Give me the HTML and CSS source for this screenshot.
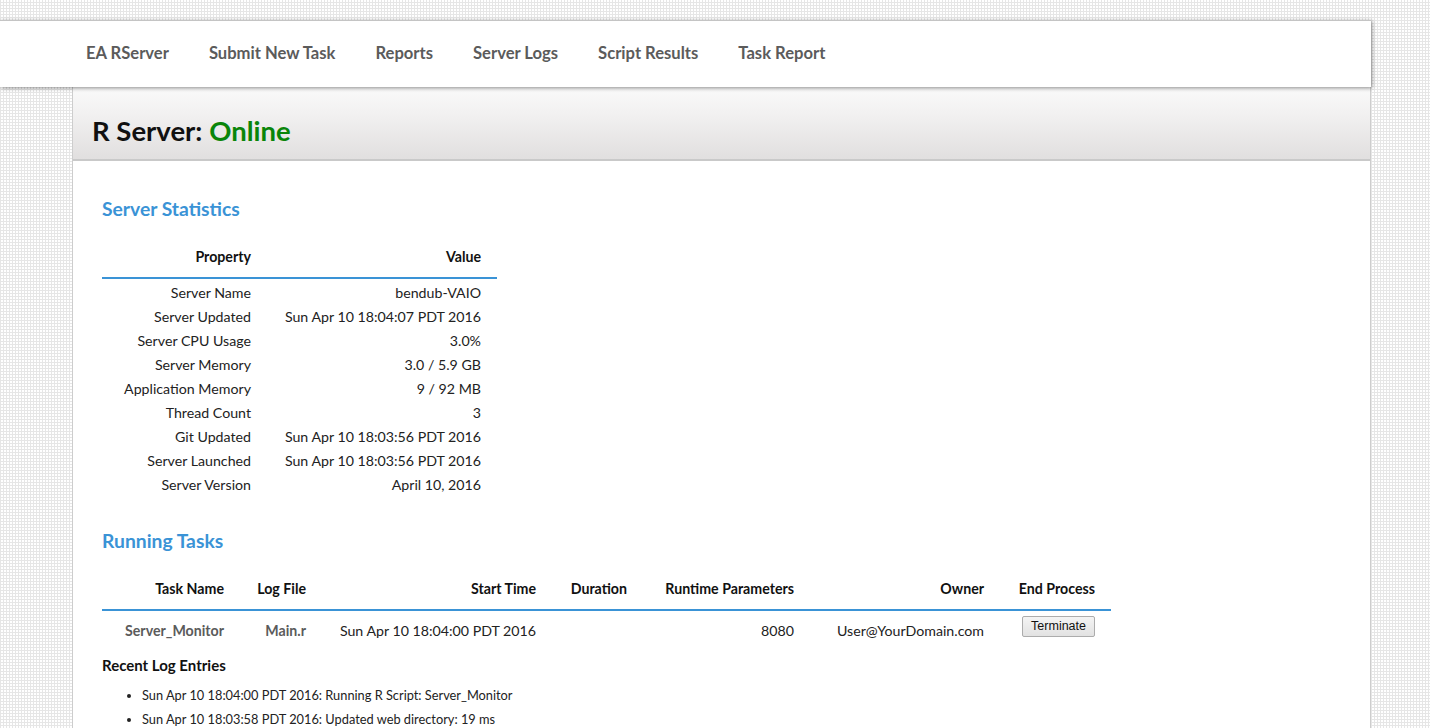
FILE: index.html
```html
<!DOCTYPE html>
<html lang="en">
<head>
<meta charset="utf-8">
<title>EA RServer</title>
<link rel="stylesheet" href="styles.css">
</head>
<body>
<div class="page">
  <nav class="nav">
    <a class="nav-link" href="#">EA RServer</a>
    <a class="nav-link" href="#">Submit New Task</a>
    <a class="nav-link" href="#">Reports</a>
    <a class="nav-link" href="#">Server Logs</a>
    <a class="nav-link" href="#">Script Results</a>
    <a class="nav-link" href="#">Task Report</a>
  </nav>
  <main class="panel">
    <header class="panel-head">
      <h1 class="title">R Server: <span class="online">Online</span></h1>
    </header>
    <section class="panel-body">
      <h2 class="section-title">Server Statistics</h2>
      <table class="data stats">
        <thead>
          <tr><th>Property</th><th>Value</th></tr>
        </thead>
        <tbody>
          <tr><td>Server Name</td><td>bendub-VAIO</td></tr>
          <tr><td>Server Updated</td><td>Sun Apr 10 18:04:07 PDT 2016</td></tr>
          <tr><td>Server CPU Usage</td><td>3.0%</td></tr>
          <tr><td>Server Memory</td><td>3.0 / 5.9 GB</td></tr>
          <tr><td>Application Memory</td><td>9 / 92 MB</td></tr>
          <tr><td>Thread Count</td><td>3</td></tr>
          <tr><td>Git Updated</td><td>Sun Apr 10 18:03:56 PDT 2016</td></tr>
          <tr><td>Server Launched</td><td>Sun Apr 10 18:03:56 PDT 2016</td></tr>
          <tr><td>Server Version</td><td>April 10, 2016</td></tr>
        </tbody>
      </table>

      <h2 class="section-title tasks-title">Running Tasks</h2>
      <table class="data tasks">
        <thead>
          <tr>
            <th class="c-name">Task Name</th>
            <th class="c-log">Log File</th>
            <th class="c-start">Start Time</th>
            <th class="c-dur">Duration</th>
            <th class="c-params">Runtime Parameters</th>
            <th class="c-owner">Owner</th>
            <th class="c-end">End Process</th>
          </tr>
        </thead>
        <tbody>
          <tr>
            <td class="strong">Server_Monitor</td>
            <td class="strong">Main.r</td>
            <td>Sun Apr 10 18:04:00 PDT 2016</td>
            <td></td>
            <td>8080</td>
            <td>User@YourDomain.com</td>
            <td><button class="btn" type="button">Terminate</button></td>
          </tr>
        </tbody>
      </table>

      <h3 class="log-title">Recent Log Entries</h3>
      <ul class="log-list">
        <li>Sun Apr 10 18:04:00 PDT 2016: Running R Script: Server_Monitor</li>
        <li>Sun Apr 10 18:03:58 PDT 2016: Updated web directory: 19 ms</li>
      </ul>
    </section>
  </main>
</div>
</body>
</html>
```

FILE: styles.css
```css
html, body {
  margin: 0;
  padding: 0;
}

body {
  font-family: Lato, "Open Sans", sans-serif;
  color: #1e1e1e;
  background-color: #ffffff;
  background-image:
    linear-gradient(90deg, #e6e6e6 1px, transparent 1px),
    linear-gradient(0deg, #e6e6e6 1px, transparent 1px);
  background-size: 3px 3px;
  height: 728px;
  overflow: hidden;
}

.page {
  padding-top: 20px;
}

.nav {
  position: relative;
  z-index: 2;
  width: 1371px;
  height: 67px;
  box-sizing: border-box;
  background: #fff;
  border-top: 1px solid #c4c4c4;
  box-shadow: 1px 1px 4px rgba(0, 0, 0, 0.45);
  display: flex;
  align-items: center;
  gap: 40px;
  padding: 0 0 3px 86px;
}

.nav-link {
  font-size: 16.6px;
  font-weight: 700;
  color: #5b5b5b;
  text-decoration: none;
}

.panel {
  margin-left: 72px;
  width: 1297px;
  background: #fff;
  border-left: 1px solid #cdcdcd;
  border-right: 1px solid #cdcdcd;
  min-height: 660px;
}

.panel-head {
  height: 72px;
  background: linear-gradient(180deg, #fafafa 0%, #f1f0f0 40%, #e1dfdf 100%);
  border-bottom: 2px solid #c9c9c9;
  display: flex;
  align-items: center;
  padding-left: 19px;
}

.title {
  margin: 0;
  font-size: 27.5px;
  font-weight: 700;
  color: #111;
  padding-top: 14px;
}

.online {
  color: #0a850a;
}

.panel-body {
  padding: 36px 29px 0 29px;
}

.section-title {
  margin: 0;
  font-size: 19.3px;
  font-weight: 700;
  color: #3a93d6;
  line-height: 24px;
}

.tasks-title {
  margin-top: 33px;
}

.data {
  border-collapse: collapse;
  font-size: 14.2px;
}

.data th {
  font-weight: 700;
  color: #111;
  text-align: right;
  padding: 0 16px 9px;
  line-height: 22px;
  border-bottom: 2px solid #3a93d6;
  white-space: nowrap;
}

.data td {
  text-align: right;
  padding: 0 16px;
  height: 24px;
  color: #222;
  white-space: nowrap;
}

.stats {
  margin-top: 25px;
}

.stats th:first-child,
.stats td:first-child {
  width: 133px;
}

.stats th:last-child,
.stats td:last-child {
  width: 198px;
}

.stats tbody tr:first-child td {
  padding-top: 1px;
}

.tasks {
  margin-top: 25px;
}

.tasks .c-name { width: 106px; }
.tasks .c-log { width: 50px; }
.tasks .c-start { width: 198px; }
.tasks .c-dur { width: 59px; }
.tasks .c-params { width: 135px; }
.tasks .c-owner { width: 158px; }
.tasks .c-end { width: 79px; }

.tasks tbody td {
  height: 38px;
}

.tasks td.strong {
  font-weight: 700;
  color: #5b5b5b;
}

.btn {
  font-family: Arial, "Liberation Sans", sans-serif;
  font-size: 12.5px;
  color: #111;
  padding: 2px 8px 3px;
  border: 1px solid #acacac;
  border-radius: 2px;
  background: linear-gradient(180deg, #f4f4f4, #e2e2e2);
  position: relative;
  top: -4px;
}

.log-title {
  margin: 7px 0 0;
  font-size: 15px;
  font-weight: 700;
  color: #111;
}

.log-list {
  margin: 9px 0 0;
  padding-left: 40px;
  font-size: 12.8px;
  color: #222;
}

.log-list li {
  line-height: 24px;
}
```
